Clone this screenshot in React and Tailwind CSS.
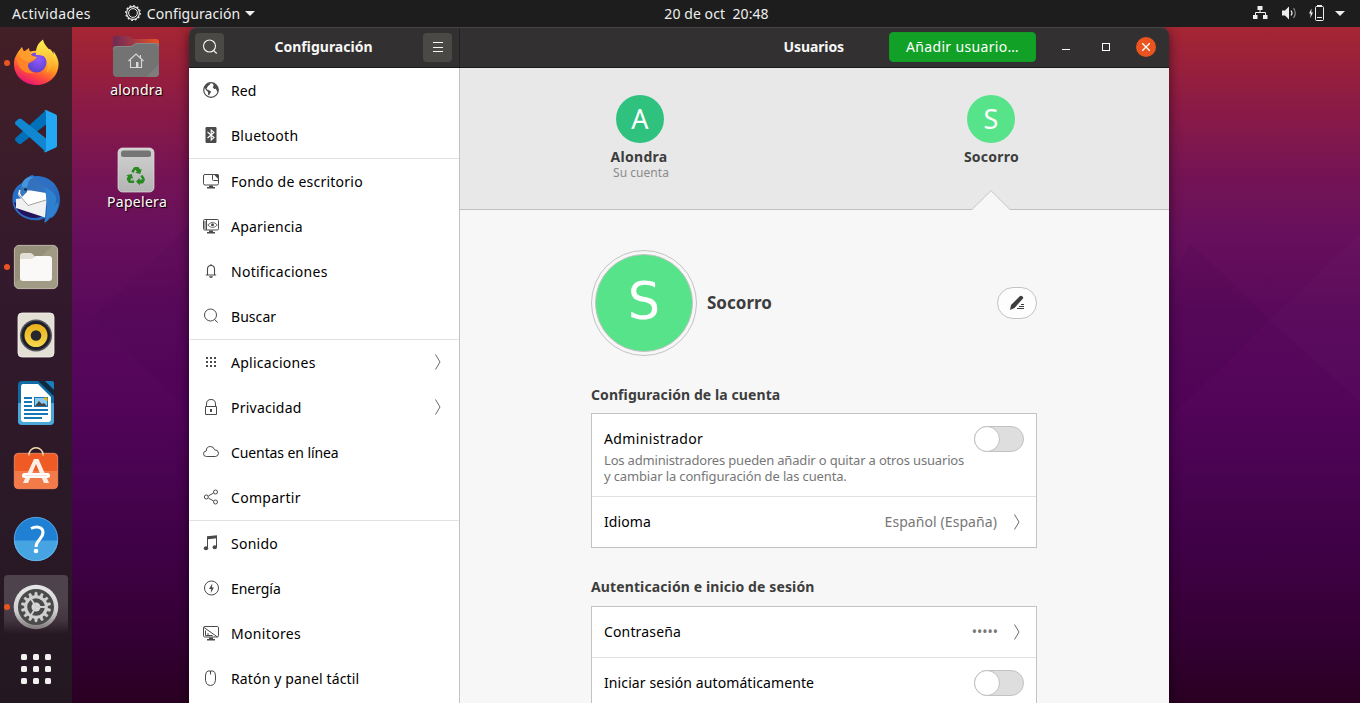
function Firefox() {
  return (
    <svg viewBox="0 0 48 48" className="size-12">
      <defs>
        <linearGradient id="fx1" x1=".8" y1=".1" x2=".3" y2="1">
          <stop offset="0" stopColor="#ffe14a" />
          <stop offset=".4" stopColor="#ff9a1f" />
          <stop offset=".7" stopColor="#ff4a3d" />
          <stop offset="1" stopColor="#e3107c" />
        </linearGradient>
        <radialGradient id="fx2" cx=".6" cy=".35" r=".7">
          <stop offset="0" stopColor="#9059ff" />
          <stop offset="1" stopColor="#5a3fc8" />
        </radialGradient>
        <linearGradient id="fx3" x1="0" y1="0" x2="0" y2="1">
          <stop offset="0" stopColor="#fff151" />
          <stop offset="1" stopColor="#ffa02a" />
        </linearGradient>
      </defs>
      <path d="M6 13 10 8l1.500 4.500c3-1 5-1 7 0 3-1 7-1 10 0L38 10c1.500 1.500 3 3.500 3.500 5.500V12C44 16 47 21 46.500 26 46 38 36 46 24.500 46 12 46 2 37 2 25 2 19 4 17 6 13z" fill="url(#fx1)" />
      <circle cx="24.500" cy="23.500" r="10" fill="url(#fx2)" />
      <path d="M24 16C23.500 9 26 4 31 .5c1 6 6 8.500 8.500 13.500 3.500 8 1 16-5.500 20 3-6 2-12-1-15.500L34 19c-3-3-6-3-10-3z" fill="url(#fx3)" />
      <path d="M5 19c3-4 8-6 12-4.500 2 2.500 4 3.500 7.500 3.500-1 4-6 5-8 6.500-1.500 4 1 8 5.500 9.500-9 2-17-5-17-15z" fill="#ff8427" />
      <path d="M9.500 8.500 12 12.500 17 9 18 14c1 2.500 3 3.500 7 4 0 2-6 2.500-8.500 5C14 22 7 20 7 14.500z" fill="#ff9c2c" />
    </svg>
  );
}

function VsCode() {
  return (
    <svg viewBox="0 0 48 48" className="size-12">
      <path d="M34 3 3.500 31q-1 1.500 0 3l3 2.500q1.500 1 3 0L36 16z" fill="#0071b8" />
      <path d="M34 45 3.500 17.500q-1-1.500 0-3l3-2.600q1.500-1 3 0L36 33z" fill="#1187d2" />
      <path d="m34 3 10 4.500q1 .6 1 2v29q0 1.400-1 2L34 45q-1.500.6-3-.8 2 1 3-.6V5q-1-1.800-3-.8z" fill="#25a8f3" />
    </svg>
  );
}

function Thunderbird() {
  return (
    <svg viewBox="0 0 48 48" className="size-12">
      <defs>
        <linearGradient id="tb1" x1="0" y1="0" x2="1" y2="1">
          <stop offset="0" stopColor="#1f6fd0" />
          <stop offset=".5" stopColor="#2f6fc4" />
          <stop offset="1" stopColor="#1b62b4" />
        </linearGradient>
      </defs>
      <path d="M14 4C17 1 19 0 21 0l1 1.200C36 0 47 9 48 23c.3 8-3 15-7 19l-1-1c-2 3-5 5-8 6l1-4-5 2c-8 1-15-1-20-5C3 36 .500 31 .500 25 0 17 4 11 10 8z" fill="url(#tb1)" />
      <path d="M2 27c2 8 7 13 14 15 6 2 12 1 16-2l-4-6L4 28z" fill="#24125a" />
      <path d="M8 13c3-8 8-11 13-11 5 1 7 5 12 9l4 8-12 1-9-4-7 2z" fill="#3472be" />
      <path d="M10 9c2-6 7-8 12-7-4 2-6 4-6 8-1 3-4 4-6 8z" fill="#4196dc" />
      <path d="M4 24 34 20l.5 5L33 42.500 4 33z" fill="#f1f1f1" />
      <path d="m7 15 12 .5L34 18v7L16.500 30.500 6 20z" fill="#fff" />
      <path d="M6.500 19 16 30.500 34 25" fill="none" stroke="#999" strokeWidth=".9" />
      <path d="M32 12c10 3 16 12 10 18l4.500-3c0 7-3 12-7 16l-2-1c-1 3-3 5-5 6 3.500-8 3.500-24-.5-36z" fill="#2f80cf" />
      <path d="m9 12 7 1-1 4-5 5-2-4z" fill="#3b79bd" />
      <circle cx="13.500" cy="14.500" r="1.400" fill="#0d2f55" />
    </svg>
  );
}

function Files() {
  return (
    <svg viewBox="0 0 48 48" className="size-12">
      <rect x="2.400" y="2.400" width="43.200" height="43.200" rx="4.500" fill="#a19b86" stroke="#c9c4b3" strokeWidth=".9" />
      <path d="M3 40 40 3H7Q3 3 3 7z" fill="#958f7a" />
      <path d="M8 13q0-3 3-3h7.500q1.500 0 2.500 1.500L24 15v10H8z" fill="#e2dfd6" />
      <path d="M8 17q0-1 1-1h11l3.500-3H37q3 0 3 3v19q0 3-3 3H11q-3 0-3-3z" fill="#faf9f7" />
    </svg>
  );
}

function Rhythmbox() {
  return (
    <svg viewBox="0 0 48 48" className="size-12">
      <defs>
        <linearGradient id="rb" x1="0" y1="0" x2="0" y2="1">
          <stop offset="0" stopColor="#eab01c" />
          <stop offset="1" stopColor="#f6d84b" />
        </linearGradient>
      </defs>
      <rect x="6" y="2" width="36" height="44" rx="4" fill="#e3dfd5" stroke="#f6f4ef" strokeWidth=".8" />
      <circle cx="24" cy="24.500" r="16" fill="#55555e" />
      <circle cx="24" cy="24.500" r="14.500" fill="#1f1f2b" />
      <circle cx="24" cy="24.500" r="11.500" fill="url(#rb)" />
      <circle cx="24" cy="24.500" r="5.300" fill="#27272d" />
    </svg>
  );
}

function Writer() {
  return (
    <svg viewBox="0 0 48 48" className="size-12">
      <path d="M10 2h17l15 15v25q0 4-4 4H10q-4 0-4-4V6q0-4 4-4z" fill="#106ba5" />
      <path d="M6 24h36v18q0 4-4 4H10q-4 0-4-4z" fill="#4aa7d8" />
      <path d="M11 5h15l13 13v22q0 3-3 3H12q-3 0-3-3V8q0-3 2-3z" fill="#fff" />
      <path d="M26 2h6l10 10v5z" fill="#0d2b40" />
      <path d="M33 2h7q2 0 2 2v7z" fill="#1680bd" />
      <path d="M12 18h8v2h-8zM12 22h8v2h-8zM12 26h8v2h-8zM12 30h24v2H12zM12 34h24v2H12zM12 38h18v2H12zM22 18h14v10H22z" fill="#1478b8" />
      <path d="M23 19h12v8H23z" fill="#8cc9ee" />
      <path d="m23 27 4-5 3 3 2-1 3 3z" fill="#444" />
      <path d="M32 19h3v3z" fill="#f3b300" stroke="#f3b300" />
    </svg>
  );
}

function Software() {
  return (
    <svg viewBox="0 2 48 48" className="size-12">
      <rect x="2.300" y="8.300" width="43.400" height="35.400" rx="4" fill="#f05a24" stroke="#f8a07c" strokeWidth=".7" />
      <path d="M2.500 26h43v14q0 3.500-3.500 3.500H6q-3.500 0-3.500-3.500z" fill="#f37b4a" />
      <path d="M17 10.500V9.500a7 6.700 0 0 1 14 0v1" fill="none" stroke="#f6dcab" strokeWidth="1.500" />
      <path d="M22 14h4.500L37 38h-5L24 19 16 38h-5z" fill="#fdeee6" />
      <rect x="10" y="28" width="28" height="5" rx="2.500" fill="#fff" />
      <path d="M13 30.500h22" stroke="#fbd9cb" strokeWidth=".8" />
    </svg>
  );
}

function Help() {
  return (
    <svg viewBox="0 0 48 48" className="size-12">
      <circle cx="24" cy="24" r="22" fill="#2080d3" />
      <path d="M2 25.500a22 20.500 0 0 0 44 0z" fill="#46a4e3" />
      <circle cx="24" cy="24" r="21.700" fill="none" stroke="#7cc0ef" strokeWidth=".6" />
      <path d="M19 13.500c6-2.800 12-1.500 12 4 0 6-7 7.500-7 14.500" fill="none" stroke="#fff" strokeWidth="3" />
      <circle cx="24" cy="36" r="2.300" fill="#fff" />
    </svg>
  );
}

function SettingsGear() {
  const teeth = Array.from({ length: 14 }, (_, i) => i);
  return (
    <svg viewBox="0 0 48 48" className="size-12">
      <defs>
        <linearGradient id="sg" x1="0" y1="0" x2="0" y2="1">
          <stop offset="0" stopColor="#e8e8e8" />
          <stop offset=".6" stopColor="#cfcfcf" />
          <stop offset="1" stopColor="#7d7678" />
        </linearGradient>
      </defs>
      <circle cx="24" cy="24" r="22.300" fill="url(#sg)" />
      <circle cx="24" cy="24" r="18" fill="#4a4a4a" />
      {teeth.map((i) => (
        <path key={i} d="M22.600 13 23 9.300h2l.4 3.700z" fill="#d0d0d0" stroke="#d0d0d0" strokeWidth=".6" transform={`rotate(${(i * 360) / 14} 24 24)`} />
      ))}
      <circle cx="24" cy="24" r="10.300" fill="none" stroke="#d0d0d0" strokeWidth="3" />
      <circle cx="24" cy="24" r="4.500" fill="#d8d8d8" />
      <path d="M24 24h10M24 24l-5.500-9M24 24l-5.500 9" stroke="#d0d0d0" strokeWidth="1.800" />
    </svg>
  );
}

const dock = [
  { Icon: Firefox, running: true },
  { Icon: VsCode },
  { Icon: Thunderbird },
  { Icon: Files, running: true },
  { Icon: Rhythmbox },
  { Icon: Writer },
  { Icon: Software },
  { Icon: Help },
  { Icon: SettingsGear, running: true, active: true },
];

function Dock() {
  return (
    <nav className="flex w-[72px] shrink-0 flex-col bg-linear-to-b from-[#431f27] via-[#32192c] via-40% to-[#231821] pt-0.5">
      {dock.map(({ Icon, running, active }, i) => (
        <div key={i} className="flex h-[68px] items-center">
          <div className={active ? "ml-1 flex h-16 w-16 items-center rounded-sm bg-linear-to-b from-[#4e434d] from-40% via-[#443640] via-70% to-transparent to-92%" : "ml-1 flex h-16 w-16 items-center"}>
            <span className={running ? "size-1.5 rounded-full bg-[#e95420]" : "size-1.5"} />
            <span className="ml-0.5">
              <Icon />
            </span>
          </div>
        </div>
      ))}
      <div className="mt-[13px] ml-[21px] grid w-[30px] grid-cols-3 gap-1.5">
        {Array.from({ length: 9 }, (_, i) => (
          <span key={i} className="size-1.5 rounded-[1.5px] bg-[#f2f0ef]" />
        ))}
      </div>
    </nav>
  );
}

function HomeFolder() {
  return (
    <svg viewBox="0 0 48 44" className="h-11 w-12">
      <defs>
        <linearGradient id="hf" x1="0" y1="0" x2="1" y2="0">
          <stop offset="0" stopColor="#6b2a55" />
          <stop offset=".45" stopColor="#a33a45" />
          <stop offset="1" stopColor="#e95420" />
        </linearGradient>
      </defs>
      <path d="M1 4q0-3 3-3h12q2 0 3 1.500L20.500 4H44q3 0 3 3v12H1z" fill="url(#hf)" />
      <path d="M1 14q0-3 3-3h14q2 0 3.500-1.500T25 8h19q3 0 3 3v27q0 4-4 4H5q-4 0-4-4z" fill="#737373" />
      <path d="M1.500 14q0-2.500 3-2.500h14q2 0 3.500-1.500t3-1.500h19q2.500 0 2.500 2.500" fill="none" stroke="#8f8f8f" strokeWidth=".7" />
      <path d="M47 29v9q0 4-4 4h-9z" fill="#7d7d7d" />
      <path d="m16.500 26 7.500-7 7.500 7M18.500 25v7.500h11V25M28.500 20v3" fill="none" stroke="#d9d9d9" strokeWidth="1.100" />
      <path d="M24 27h2.500v5H24z" fill="#d9d9d9" />
    </svg>
  );
}

function Trash() {
  const arrows = [0, 120, 240];
  return (
    <svg viewBox="0 0 38 48" className="h-12 w-[38px]">
      <defs>
        <linearGradient id="tr" x1="0" y1="0" x2="0" y2="1">
          <stop offset="0" stopColor="#d2d2d2" />
          <stop offset="1" stopColor="#b4b4b4" />
        </linearGradient>
      </defs>
      <rect x="1" y="2" width="36" height="44" rx="4.500" fill="url(#tr)" stroke="#dedede" strokeWidth=".7" />
      <rect x="4" y="4.500" width="30" height="6.500" rx="2.500" fill="#757575" />
      {arrows.map((a) => (
        <path
          key={a}
          d="m14.300 25.500 2.200-3.500q.6-1 1.600-1h2.500q1 0 1.600 1l1 1.700 1.700-1-1.700 5.300-5-1.200 1.700-1-1.500-2.300-2 3.500z"
          fill="#27891f"
          transform={`rotate(${a} 19 30.500)`}
        />
      ))}
    </svg>
  );
}

function DesktopIcons() {
  return (
    <div className="flex w-[117px] shrink-0 flex-col items-center pt-2 pl-3 text-white [text-shadow:1px_1px_1px_#000]">
      <span className="mr-px">
        <HomeFolder />
      </span>
      <span className="leading-[22px] tracking-[0.3px]">alondra</span>
      <span className="mt-[45px] mr-0.5">
        <Trash />
      </span>
      <span className="-mt-0.5 ml-px leading-5 tracking-[0.3px]">Papelera</span>
    </div>
  );
}

function Glyph({ name }) {
  const s = { fill: "none", stroke: "currentColor", strokeWidth: 1 };
  const glyphs = {
    globe: (
      <g>
        <circle cx="8" cy="8" r="7.300" {...s} strokeWidth="1.200" />
        <path d="M1.500 5 3.500 2.200 6.500 1l1 .6-1 1.500-1.500 1-.8 1.500-.7.900.6 1 1.700.7L7 8.700 8.200 9.800 7 11.500l-1 2-.8-.8-.2-2.700-2-2L2 6.500zM9.500 1l3.800 2 2 4-.4 3.500-1.500-2.500-.5-1.200-1.700.2L9.700 5.300l1-1.600z" fill="currentColor" />
      </g>
    ),
    bluetooth: (
      <g>
        <rect x="2.500" y="0" width="11" height="16" rx="1.200" fill="currentColor" />
        <path d="m4.500 5 6.500 5.500L8.200 13V3L11 5.500 4.500 11" fill="none" stroke="#fff" strokeWidth="1.100" />
      </g>
    ),
    background: (
      <g>
        <path d="M9.500 1.500H2Q.5 1.500.5 3v7.500Q.5 12 2 12h12q1.500 0 1.500-1.500V7M9.500 1.500v5q0 1 1 1h5V3q0-1.500-1.500-1.500z" {...s} />
        <path d="M10.500 1H14q2 0 2 2v4zM6 12.500h4V14h2v1.500H4V14h2z" fill="currentColor" />
      </g>
    ),
    appearance: (
      <g>
        <rect x=".5" y="1.500" width="15" height="10.500" rx="1.200" {...s} />
        <path d="M3.500 2v10M1 4h2M1 6h2M1 8h2M1 10h2" {...s} />
        <path d="M4.800 7Q9.500 1.800 14.300 7 9.500 12 4.800 7z" {...s} strokeWidth=".8" />
        <circle cx="9.500" cy="6.800" r="1.500" fill="currentColor" />
        <path d="M6 12.500h4V14h2v1.500H4V14h2z" fill="currentColor" />
      </g>
    ),
    bell: (
      <g>
        <path d="M4.500 11.500V6q0-3.500 3.500-3.500T11.500 6v5.500M2.800 12h10.400M7.500 1.500h1" {...s} strokeWidth="1.100" />
        <path d="M6 13.300h4q-.3 1.700-2 1.700t-2-1.700z" fill="currentColor" />
      </g>
    ),
    search: (
      <g>
        <circle cx="7.500" cy="7" r="6" {...s} />
        <path d="m11.500 11.500 3.300 3" {...s} />
      </g>
    ),
    apps: (
      <g fill="currentColor">
        {[3, 7, 11].map((y) => [3, 7, 11].map((x) => <rect key={`${x}-${y}`} x={x} y={y} width="2" height="2" />))}
      </g>
    ),
    lock: (
      <g>
        <path d="M2.500 7.500h11v8h-11zM3.500 7V5Q3.500.5 8 .5T12.500 5v2" {...s} />
        <path d="M7 10h2v3H7z" fill="currentColor" />
      </g>
    ),
    cloud: <path d="M3.500 12.500Q.5 12.500.5 9.800T3.300 7q0-4.500 4-4.500 3.400 0 4.200 3.200 4 .3 4 3.400t-3 3.400z" {...s} />,
    share: (
      <g {...s}>
        <circle cx="3.300" cy="8" r="2" />
        <circle cx="12.500" cy="3" r="2" />
        <circle cx="12.500" cy="13" r="2" />
        <path d="m5.500 6.800 5-2.700M5.500 9.200l5 2.700" />
      </g>
    ),
    music: (
      <g fill="currentColor">
        <path d="M4 1.200 14 .2v3L5 4.200V13H4z" />
        <path d="M13 2h1v10h-1z" />
        <ellipse cx="3" cy="13.300" rx="2.200" ry="2" />
        <ellipse cx="11.800" cy="12.200" rx="2.200" ry="2" />
      </g>
    ),
    power: (
      <g>
        <circle cx="8.500" cy="8" r="7" {...s} />
        <path d="M9.300 3.500 6 9h2.200l-.4 4 3.200-5.500H9z" fill="currentColor" />
      </g>
    ),
    display: (
      <g>
        <rect x=".5" y="1.500" width="15" height="10.500" rx="1.200" {...s} />
        <path d="M1 2.500 14.500 12M2.500 5.500v5M2.500 10.500h7M5 8v2.500" {...s} />
        <path d="M6 12.500h4V14h2v1.500H4V14h2z" fill="currentColor" />
      </g>
    ),
    mouse: <path d="M2.500 6q0-4.500 2.500-5h5q2.500.5 2.500 5 .8 9.500-5 9.500T2.500 6zM7.500 1v3.500" {...s} />,
  };
  return (
    <svg viewBox="0 0 16 16" className="-mt-px size-4 shrink-0 text-[#4a4a4a]">
      {glyphs[name]}
    </svg>
  );
}

function Chevron() {
  return (
    <svg viewBox="0 0 6 16" className="-mt-px h-4 w-1.5" fill="none" stroke="#6a6a6a">
      <path d="M.5.500 5 8 .5 15.500" />
    </svg>
  );
}

const groups = [
  [
    ["globe", "Red", "tracking-[0.1px]"],
    ["bluetooth", "Bluetooth", "tracking-[0.26px]"],
  ],
  [
    ["background", "Fondo de escritorio", "tracking-[0.24px]"],
    ["appearance", "Apariencia", "tracking-[0.22px]"],
    ["bell", "Notificaciones", "tracking-[0.27px]"],
    ["search", "Buscar", "tracking-[0.05px]"],
  ],
  [
    ["apps", "Aplicaciones", "tracking-[0.27px]", true],
    ["lock", "Privacidad", "tracking-[0.24px]", true],
    ["cloud", "Cuentas en línea", "tracking-[-0.1px]"],
    ["share", "Compartir", "tracking-[0.3px]"],
  ],
  [
    ["music", "Sonido", "tracking-[0.25px]"],
    ["power", "Energía", "tracking-[-0.05px]"],
    ["display", "Monitores", "tracking-[0.34px]"],
    ["mouse", "Ratón y panel táctil", "tracking-[0.15px]"],
  ],
];

function Sidebar() {
  return (
    <aside className="flex w-[271px] shrink-0 flex-col border-r border-[#c3c3c3] bg-white">
      {groups.map((rows, g) => (
        <ul key={g} className={g ? "border-t border-[#e1e1e1]" : ""}>
          {rows.map(([icon, label, tracking, more]) => (
            <li key={label} className="flex h-[45px] items-center justify-between pr-[18px] pl-3.5">
              <div className="flex items-center">
                <Glyph name={icon} />
                <span className={`ml-3 whitespace-nowrap text-black ${tracking}`}>{label}</span>
              </div>
              {more && <Chevron />}
            </li>
          ))}
        </ul>
      ))}
    </aside>
  );
}

function Toggle() {
  return (
    <span className="flex h-[26px] w-[50px] shrink-0 rounded-full border border-[#c2c2c2] bg-[#dedede]">
      <span className="-mt-px -ml-px size-[26px] rounded-full border border-[#c0c0c0] bg-white" />
    </span>
  );
}

function Card({ children }) {
  return <div className="border border-[#c3c3c3] bg-white">{children}</div>;
}

function Header() {
  return (
    <header className="flex h-[41px] shrink-0 rounded-t-lg border-t border-b border-t-[#454343] border-b-[#1b1a1a] bg-[#323030] text-[#f7f7f7]">
      <div className="flex w-[271px] shrink-0 items-center justify-between border-r border-[#232222] pr-[7px] pb-px pl-1.5">
        <button className="flex size-[29px] items-center justify-center rounded-[4px] bg-[#4a4946]">
          <svg viewBox="0 0 16 16" className="size-4" fill="none" stroke="currentColor" strokeWidth="1.100">
            <circle cx="7.500" cy="7" r="6" />
            <path d="m11.500 11.500 3.300 3" />
          </svg>
        </button>
        <h1 className="text-sm font-bold">Configuración</h1>
        <button className="flex size-[29px] items-center justify-center rounded-[4px] bg-[#4a4946]">
          <svg viewBox="0 0 10 10" className="size-2.5" stroke="currentColor" shapeRendering="crispEdges">
            <path d="M0 .5h10M0 5h10M0 9.500h10" />
          </svg>
        </button>
      </div>
      <div className="flex flex-1 items-center justify-end pb-px">
        <h2 className="text-sm font-bold tracking-[-0.1px]">Usuarios</h2>
        <button className="ml-[45px] flex h-[30px] w-[147px] items-center justify-center rounded-[4px] border border-[#119a25] bg-[#12a127] text-white">
          <span className="tracking-[0.34px]">Añadir usuario…</span>
        </button>
        <span className="mt-1 ml-[26px] h-px w-2 bg-white" />
        <span className="ml-8 size-2 border border-white" />
        <span className="mr-[13px] ml-[26px] flex size-5 items-center justify-center rounded-full bg-[#e95420]">
          <svg viewBox="0 0 8 8" className="size-2" stroke="#fff" strokeWidth="1.300">
            <path d="m0 0 8 8M8 0 0 8" />
          </svg>
        </span>
      </div>
    </header>
  );
}

function Main() {
  return (
    <main className="flex flex-1 flex-col bg-[#f7f7f7]">
      <section className="flex h-[142px] shrink-0 border-b border-[#c0c0c0] bg-[#e8e8e8] pt-[27px] text-[#3d3d3d]">
        <div className="ml-[130px] flex w-[100px] flex-col items-center">
          <span className="flex size-12 shrink-0 items-center justify-center rounded-full bg-[#2ec27e] text-[27px] text-white">A</span>
          <span className="mt-1 -ml-0.5 text-sm leading-5 font-bold tracking-[0.3px]">Alondra</span>
          <span className="ml-0.5 text-xs leading-3 tracking-[0.05px] text-[#8b8b8b]">Su cuenta</span>
        </div>
        <div className="ml-[251px] flex w-[100px] flex-col items-center">
          <span className="flex size-12 shrink-0 items-center justify-center rounded-full bg-[#57e389] text-[27px] text-white">S</span>
          <span className="mt-1 ml-px text-sm leading-5 font-bold tracking-[0.25px]">Socorro</span>
          <svg viewBox="0 0 38 20" className="mt-[23px] -mb-px h-5 w-[38px] shrink-0">
            <path d="M0 19.500 19 .7l19 18.800v.5H0z" fill="#f7f7f7" />
            <path d="M0 19.500 19 .7l19 18.800" fill="none" stroke="#c6c6c6" />
          </svg>
        </div>
      </section>
      <section className="ml-[131px] flex w-[446px] flex-col">
        <div className="mt-10 flex items-center">
          <span className="flex size-[106px] items-center justify-center rounded-full border border-[#c3c3c3] p-[3px]">
            <span className="flex size-full items-center justify-center rounded-full border border-[#c3c3c3] bg-[#57e389] pb-0.5 font-['DejaVu_Sans',sans-serif] text-[51px] text-white">S</span>
          </span>
          <span className="ml-2.5 text-[17px] font-bold text-[#3d3d3d]">Socorro</span>
          <button className="ml-auto flex h-8 w-10 items-center justify-center rounded-full border border-[#c3c3c3] bg-[#fdfdfd]">
            <svg viewBox="0 0 16 16" className="size-4" fill="#3d3d3d">
              <path d="M10.500 1.500q1.500-1.500 3 0t0 2.500L5.500 13 1 15l1-5z" />
              <path d="M12 9h3v1h-3zM10 11h5v1h-5zM8 13h7v1H8z" />
            </svg>
          </button>
        </div>
        <h3 className="mt-7 text-sm leading-[22px] font-bold tracking-[0.09px] text-[#3d3d3d]">Configuración de la cuenta</h3>
        <div className="mt-[7px]">
          <Card>
            <div className="flex h-[82px] items-start justify-between px-3 pt-3">
              <div className="flex flex-col whitespace-nowrap">
                <span className="mt-px leading-6 tracking-[0.36px] text-black">Administrador</span>
                <span className="mt-px text-[13px] leading-4 tracking-[-0.17px] text-[#777]">Los administradores pueden añadir o quitar a otros usuarios</span>
                <span className="text-[13px] leading-4 tracking-[-0.14px] text-[#777]">y cambiar la configuración de las cuenta.</span>
              </div>
              <Toggle />
            </div>
            <div className="flex h-[51px] items-center border-t border-[#e1e1e1] pr-4 pl-3">
              <span className="tracking-[0.1px] text-black">Idioma</span>
              <span className="mr-[17px] ml-auto tracking-[0.08px] text-[#777]">Español (España)</span>
              <Chevron />
            </div>
          </Card>
        </div>
        <h3 className="mt-7 text-sm leading-[22px] font-bold tracking-[0.12px] text-[#3d3d3d]">Autenticación e inicio de sesión</h3>
        <div className="mt-2">
          <Card>
            <div className="flex h-[50px] items-center pr-4 pl-3">
              <span className="tracking-[0.15px] text-black">Contraseña</span>
              <span className="mr-4 ml-auto text-[#777]">•••••</span>
              <Chevron />
            </div>
            <div className="flex h-[51px] items-center justify-between border-t border-[#e1e1e1] px-3">
              <span className="tracking-[0.1px] text-black">Iniciar sesión automáticamente</span>
              <Toggle />
            </div>
          </Card>
        </div>
      </section>
    </main>
  );
}

function TopBar() {
  return (
    <header className="grid h-[27px] shrink-0 grid-cols-[1fr_auto_1fr] items-center bg-[#1d1d1d] text-[#eee]">
      <div className="flex items-center pl-3">
        <span className="tracking-[0.37px]">Actividades</span>
        <svg viewBox="0 0 16 16" className="-mt-0.5 ml-[34px] size-4" fill="none" stroke="currentColor">
          <circle cx="8" cy="8" r="6.400" strokeWidth="1.100" />
          <circle cx="8" cy="8" r="4.400" strokeWidth="1" />
          <circle cx="8" cy="8" r="7.300" strokeWidth="1.200" strokeDasharray="1.800 2.020" />
        </svg>
        <span className="ml-1.5 tracking-[0.08px]">Configuración</span>
        <svg viewBox="0 0 10 5" className="-mt-px ml-[5px] h-[5px] w-2.5" fill="currentColor">
          <path d="M0 0h10L5 5z" />
        </svg>
      </div>
      <span className="ml-[73px] tracking-[0.08px] whitespace-pre">20 de oct  20:48</span>
      <div className="-mt-px flex items-center justify-end pr-[15px]">
        <svg viewBox="0 0 16 16" className="size-4" fill="currentColor">
          <path d="M5.500 1h5v4h-5zM1 10h4.500v4H1zM11 10h4.500v4H11z" />
          <path d="M8 4v4M3.500 11V7.500h10V11" fill="none" stroke="currentColor" />
        </svg>
        <svg viewBox="0 0 16 16" className="mr-[11px] ml-[13px] size-4" fill="currentColor">
          <path d="M1 5.500h3L8 1.500v13l-4-4H1z" />
          <path d="M10 5.500q2 2.500 0 5" fill="none" stroke="currentColor" strokeWidth="1.200" />
          <path d="M12.500 3q3.500 5 0 10" fill="none" stroke="#8f8f8f" strokeWidth="1.200" />
        </svg>
        <svg viewBox="0 0 16 16" className="size-4" fill="currentColor">
          <path d="M3.500 3.500 1 8.500h1.700l-.4 4.500L5 7.500H3.300z" />
          <path d="M9 0h5v2H9zM9 12h5v1H9z" />
          <rect x="7.500" y="1.500" width="8" height="14" rx="1" fill="none" stroke="currentColor" />
        </svg>
        <svg viewBox="0 0 10 5" className="ml-[11px] h-[5px] w-2.5" fill="currentColor">
          <path d="M0 0h10L5 5z" />
        </svg>
      </div>
    </header>
  );
}

function Facets() {
  return (
    <svg viewBox="0 0 1360 703" className="absolute inset-0 h-full w-full">
      <path d="M93 318 189 225v185z" fill="#300038" opacity=".05" />
      <path d="m1190 243 80 77-101 98V283z" fill="#300038" opacity=".07" />
      <path d="m1270 320 90-86v168z" fill="#fff" opacity=".015" />
    </svg>
  );
}

export default function App() {
  return (
    <div className="relative flex h-[703px] w-[1360px] flex-col overflow-hidden bg-[linear-gradient(to_bottom,#a62633_27px,#8f1c43_95px,#761453_170px,#68105c_230px,#5a095b_310px,#53055a_400px,#480350_480px,#3f0145_550px,#350036_630px,#2a0022_703px)] font-['Noto_Sans',sans-serif] text-sm">
      <Facets />
      <div className="relative flex min-h-0 flex-1 flex-col">
        <TopBar />
        <div className="flex min-h-0 flex-1 overflow-hidden">
          <Dock />
          <DesktopIcons />
          <div className="flex h-[700px] w-[980px] flex-col rounded-t-lg shadow-[0_3px_12px_0_rgba(0,0,0,0.55)]">
            <Header />
            <div className="flex min-h-0 flex-1">
              <Sidebar />
              <Main />
            </div>
          </div>
        </div>
      </div>
    </div>
  );
}
